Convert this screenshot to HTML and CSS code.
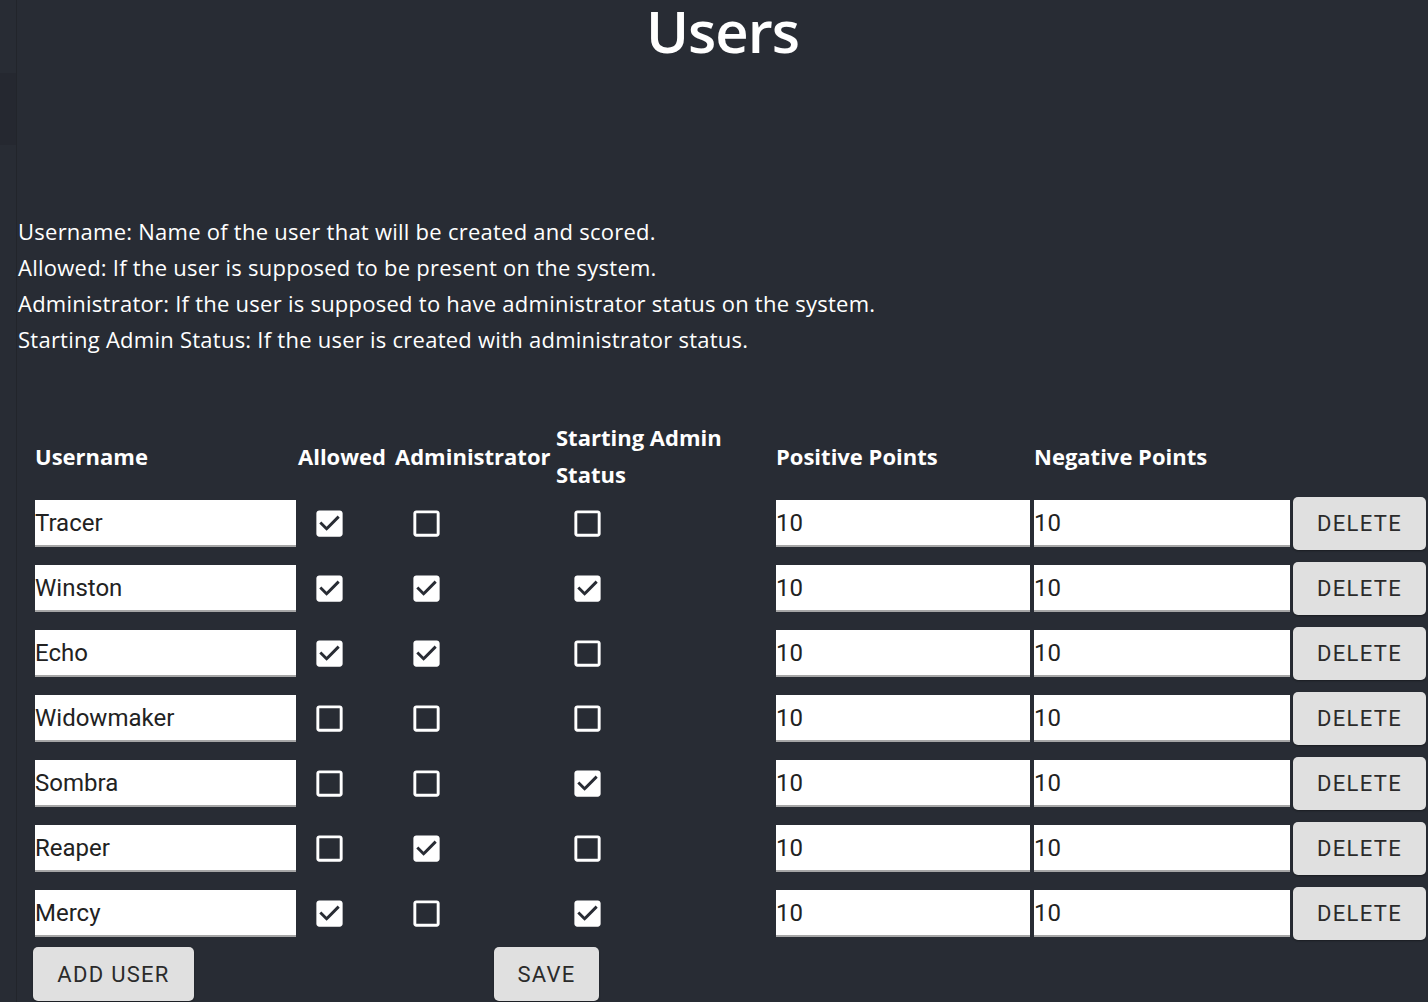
FILE: index.html
```html
<!DOCTYPE html>
<html lang="en">
<head>
<meta charset="utf-8">
<title>Users</title>
<link rel="stylesheet" href="styles.css">
</head>
<body>
<div class="app">
  <aside class="sidebar"><div class="sidebar-active"></div></aside>
  <main class="main">
    <h1 class="title">Users</h1>
    <div class="help">
      <p>Username: Name of the user that will be created and scored.</p>
      <p>Allowed: If the user is supposed to be present on the system.</p>
      <p>Administrator: If the user is supposed to have administrator status on the system.</p>
      <p>Starting Admin Status: If the user is created with administrator status.</p>
    </div>

    <div class="users">
      <div class="users-head">
        <div class="th">Username</div>
        <div class="th">Allowed</div>
        <div class="th">Administrator</div>
        <div class="th">Starting Admin Status</div>
        <div class="th">Positive Points</div>
        <div class="th">Negative Points</div>
        <div class="th"></div>
      </div>

      <div class="user-row">
        <div class="td"><input class="field name" value="Tracer"></div>
        <div class="td"><span class="cb"><svg viewBox="0 0 24 24"><path d="M19 3H5c-1.11 0-2 .9-2 2v14c0 1.1.89 2 2 2h14c1.11 0 2-.9 2-2V5c0-1.1-.89-2-2-2zm-9 14l-5-5 1.41-1.41L10 14.17l7.59-7.59L19 8l-7 7z"/></svg></span></div>
        <div class="td"><span class="cb"><svg viewBox="0 0 24 24"><path d="M19 5v14H5V5h14m0-2H5c-1.1 0-2 .9-2 2v14c0 1.1.9 2 2 2h14c1.1 0 2-.9 2-2V5c0-1.1-.9-2-2-2z"/></svg></span></div>
        <div class="td"><span class="cb"><svg viewBox="0 0 24 24"><path d="M19 5v14H5V5h14m0-2H5c-1.1 0-2 .9-2 2v14c0 1.1.9 2 2 2h14c1.1 0 2-.9 2-2V5c0-1.1-.9-2-2-2z"/></svg></span></div>
        <div class="td"><input class="field pos" value="10"></div>
        <div class="td"><input class="field neg" value="10"></div>
        <div class="td"><button class="btn del">DELETE</button></div>
      </div>

      <div class="user-row">
        <div class="td"><input class="field name" value="Winston"></div>
        <div class="td"><span class="cb"><svg viewBox="0 0 24 24"><path d="M19 3H5c-1.11 0-2 .9-2 2v14c0 1.1.89 2 2 2h14c1.11 0 2-.9 2-2V5c0-1.1-.89-2-2-2zm-9 14l-5-5 1.41-1.41L10 14.17l7.59-7.59L19 8l-7 7z"/></svg></span></div>
        <div class="td"><span class="cb"><svg viewBox="0 0 24 24"><path d="M19 3H5c-1.11 0-2 .9-2 2v14c0 1.1.89 2 2 2h14c1.11 0 2-.9 2-2V5c0-1.1-.89-2-2-2zm-9 14l-5-5 1.41-1.41L10 14.17l7.59-7.59L19 8l-7 7z"/></svg></span></div>
        <div class="td"><span class="cb"><svg viewBox="0 0 24 24"><path d="M19 3H5c-1.11 0-2 .9-2 2v14c0 1.1.89 2 2 2h14c1.11 0 2-.9 2-2V5c0-1.1-.89-2-2-2zm-9 14l-5-5 1.41-1.41L10 14.17l7.59-7.59L19 8l-7 7z"/></svg></span></div>
        <div class="td"><input class="field pos" value="10"></div>
        <div class="td"><input class="field neg" value="10"></div>
        <div class="td"><button class="btn del">DELETE</button></div>
      </div>

      <div class="user-row">
        <div class="td"><input class="field name" value="Echo"></div>
        <div class="td"><span class="cb"><svg viewBox="0 0 24 24"><path d="M19 3H5c-1.11 0-2 .9-2 2v14c0 1.1.89 2 2 2h14c1.11 0 2-.9 2-2V5c0-1.1-.89-2-2-2zm-9 14l-5-5 1.41-1.41L10 14.17l7.59-7.59L19 8l-7 7z"/></svg></span></div>
        <div class="td"><span class="cb"><svg viewBox="0 0 24 24"><path d="M19 3H5c-1.11 0-2 .9-2 2v14c0 1.1.89 2 2 2h14c1.11 0 2-.9 2-2V5c0-1.1-.89-2-2-2zm-9 14l-5-5 1.41-1.41L10 14.17l7.59-7.59L19 8l-7 7z"/></svg></span></div>
        <div class="td"><span class="cb"><svg viewBox="0 0 24 24"><path d="M19 5v14H5V5h14m0-2H5c-1.1 0-2 .9-2 2v14c0 1.1.9 2 2 2h14c1.1 0 2-.9 2-2V5c0-1.1-.9-2-2-2z"/></svg></span></div>
        <div class="td"><input class="field pos" value="10"></div>
        <div class="td"><input class="field neg" value="10"></div>
        <div class="td"><button class="btn del">DELETE</button></div>
      </div>

      <div class="user-row">
        <div class="td"><input class="field name" value="Widowmaker"></div>
        <div class="td"><span class="cb"><svg viewBox="0 0 24 24"><path d="M19 5v14H5V5h14m0-2H5c-1.1 0-2 .9-2 2v14c0 1.1.9 2 2 2h14c1.1 0 2-.9 2-2V5c0-1.1-.9-2-2-2z"/></svg></span></div>
        <div class="td"><span class="cb"><svg viewBox="0 0 24 24"><path d="M19 5v14H5V5h14m0-2H5c-1.1 0-2 .9-2 2v14c0 1.1.9 2 2 2h14c1.1 0 2-.9 2-2V5c0-1.1-.9-2-2-2z"/></svg></span></div>
        <div class="td"><span class="cb"><svg viewBox="0 0 24 24"><path d="M19 5v14H5V5h14m0-2H5c-1.1 0-2 .9-2 2v14c0 1.1.9 2 2 2h14c1.1 0 2-.9 2-2V5c0-1.1-.9-2-2-2z"/></svg></span></div>
        <div class="td"><input class="field pos" value="10"></div>
        <div class="td"><input class="field neg" value="10"></div>
        <div class="td"><button class="btn del">DELETE</button></div>
      </div>

      <div class="user-row">
        <div class="td"><input class="field name" value="Sombra"></div>
        <div class="td"><span class="cb"><svg viewBox="0 0 24 24"><path d="M19 5v14H5V5h14m0-2H5c-1.1 0-2 .9-2 2v14c0 1.1.9 2 2 2h14c1.1 0 2-.9 2-2V5c0-1.1-.9-2-2-2z"/></svg></span></div>
        <div class="td"><span class="cb"><svg viewBox="0 0 24 24"><path d="M19 5v14H5V5h14m0-2H5c-1.1 0-2 .9-2 2v14c0 1.1.9 2 2 2h14c1.1 0 2-.9 2-2V5c0-1.1-.9-2-2-2z"/></svg></span></div>
        <div class="td"><span class="cb"><svg viewBox="0 0 24 24"><path d="M19 3H5c-1.11 0-2 .9-2 2v14c0 1.1.89 2 2 2h14c1.11 0 2-.9 2-2V5c0-1.1-.89-2-2-2zm-9 14l-5-5 1.41-1.41L10 14.17l7.59-7.59L19 8l-7 7z"/></svg></span></div>
        <div class="td"><input class="field pos" value="10"></div>
        <div class="td"><input class="field neg" value="10"></div>
        <div class="td"><button class="btn del">DELETE</button></div>
      </div>

      <div class="user-row">
        <div class="td"><input class="field name" value="Reaper"></div>
        <div class="td"><span class="cb"><svg viewBox="0 0 24 24"><path d="M19 5v14H5V5h14m0-2H5c-1.1 0-2 .9-2 2v14c0 1.1.9 2 2 2h14c1.1 0 2-.9 2-2V5c0-1.1-.9-2-2-2z"/></svg></span></div>
        <div class="td"><span class="cb"><svg viewBox="0 0 24 24"><path d="M19 3H5c-1.11 0-2 .9-2 2v14c0 1.1.89 2 2 2h14c1.11 0 2-.9 2-2V5c0-1.1-.89-2-2-2zm-9 14l-5-5 1.41-1.41L10 14.17l7.59-7.59L19 8l-7 7z"/></svg></span></div>
        <div class="td"><span class="cb"><svg viewBox="0 0 24 24"><path d="M19 5v14H5V5h14m0-2H5c-1.1 0-2 .9-2 2v14c0 1.1.9 2 2 2h14c1.1 0 2-.9 2-2V5c0-1.1-.9-2-2-2z"/></svg></span></div>
        <div class="td"><input class="field pos" value="10"></div>
        <div class="td"><input class="field neg" value="10"></div>
        <div class="td"><button class="btn del">DELETE</button></div>
      </div>

      <div class="user-row">
        <div class="td"><input class="field name" value="Mercy"></div>
        <div class="td"><span class="cb"><svg viewBox="0 0 24 24"><path d="M19 3H5c-1.11 0-2 .9-2 2v14c0 1.1.89 2 2 2h14c1.11 0 2-.9 2-2V5c0-1.1-.89-2-2-2zm-9 14l-5-5 1.41-1.41L10 14.17l7.59-7.59L19 8l-7 7z"/></svg></span></div>
        <div class="td"><span class="cb"><svg viewBox="0 0 24 24"><path d="M19 5v14H5V5h14m0-2H5c-1.1 0-2 .9-2 2v14c0 1.1.9 2 2 2h14c1.1 0 2-.9 2-2V5c0-1.1-.9-2-2-2z"/></svg></span></div>
        <div class="td"><span class="cb"><svg viewBox="0 0 24 24"><path d="M19 3H5c-1.11 0-2 .9-2 2v14c0 1.1.89 2 2 2h14c1.11 0 2-.9 2-2V5c0-1.1-.89-2-2-2zm-9 14l-5-5 1.41-1.41L10 14.17l7.59-7.59L19 8l-7 7z"/></svg></span></div>
        <div class="td"><input class="field pos" value="10"></div>
        <div class="td"><input class="field neg" value="10"></div>
        <div class="td"><button class="btn del">DELETE</button></div>
      </div>
    </div>

    <div class="actions">
      <button class="btn add">ADD USER</button>
      <button class="btn save">SAVE</button>
    </div>
  </main>
</div>
</body>
</html>
```

FILE: styles.css
```css
html, body {
  margin: 0;
  padding: 0;
  height: 1002px;
  overflow: hidden;
  background: #282c34;
}

.app {
  display: flex;
  height: 1002px;
  color: #ffffff;
  font-family: "Open Sans", "Noto Sans", sans-serif;
}

.sidebar {
  width: 16px;
  flex: none;
  border-right: 1px solid #22252b;
  padding-top: 73px;
  box-sizing: content-box;
}

.sidebar-active {
  height: 72px;
  background: #252830;
}

.main {
  flex: 1;
  min-width: 0;
}

.title {
  margin: 0;
  padding-top: 6px;
  text-align: center;
  font-size: 58px;
  font-weight: 600;
  line-height: 50px;
  letter-spacing: -1px;
}

.help {
  margin-top: 157px;
  padding-left: 1px;
  font-size: 22px;
  letter-spacing: 0.25px;
}

.help p {
  margin: 0;
  line-height: 36px;
}

.users {
  margin-top: 62px;
  margin-left: 18px;
}

.users-head,
.user-row {
  display: grid;
  grid-template-columns: 263px 97px 161px 220px 258px 259px 133px;
  align-items: center;
}

.users-head {
  height: 72px;
}

.th {
  font-size: 22px;
  font-weight: 700;
  line-height: 37px;
  letter-spacing: 0;
}

.user-row {
  height: 65px;
}

.td {
  display: flex;
  align-items: center;
}

.field {
  box-sizing: border-box;
  height: 47px;
  border: none;
  border-bottom: 2px solid #a6a6a6;
  background: #ffffff;
  padding: 0;
  margin: 0;
  font-family: Roboto, "Liberation Sans", sans-serif;
  font-size: 24px;
  color: #222222;
  outline: none;
}

.name { width: 261px; }
.pos { width: 254px; }
.neg { width: 256px; }

.cb {
  display: block;
  width: 35px;
  height: 35px;
  margin-left: 14px;
}

.cb svg {
  display: block;
  width: 35px;
  height: 35px;
  fill: #ffffff;
}

.btn {
  box-sizing: border-box;
  border: none;
  border-radius: 5px;
  background: #e0e0e0;
  color: #2b2b2b;
  font-family: Roboto, "Liberation Sans", sans-serif;
  font-size: 22px;
  font-weight: 400;
  letter-spacing: 1.3px;
  padding: 0 20px;
  margin: 0;
  box-shadow: 0 1px 2px rgba(0, 0, 0, 0.35);
}

.del {
  width: 133px;
  height: 53px;
}

.actions {
  display: flex;
  margin-top: 1px;
  padding-left: 16px;
  gap: 300px;
}

.add {
  width: 161px;
  height: 54px;
}

.save {
  width: 105px;
  height: 54px;
}
```
